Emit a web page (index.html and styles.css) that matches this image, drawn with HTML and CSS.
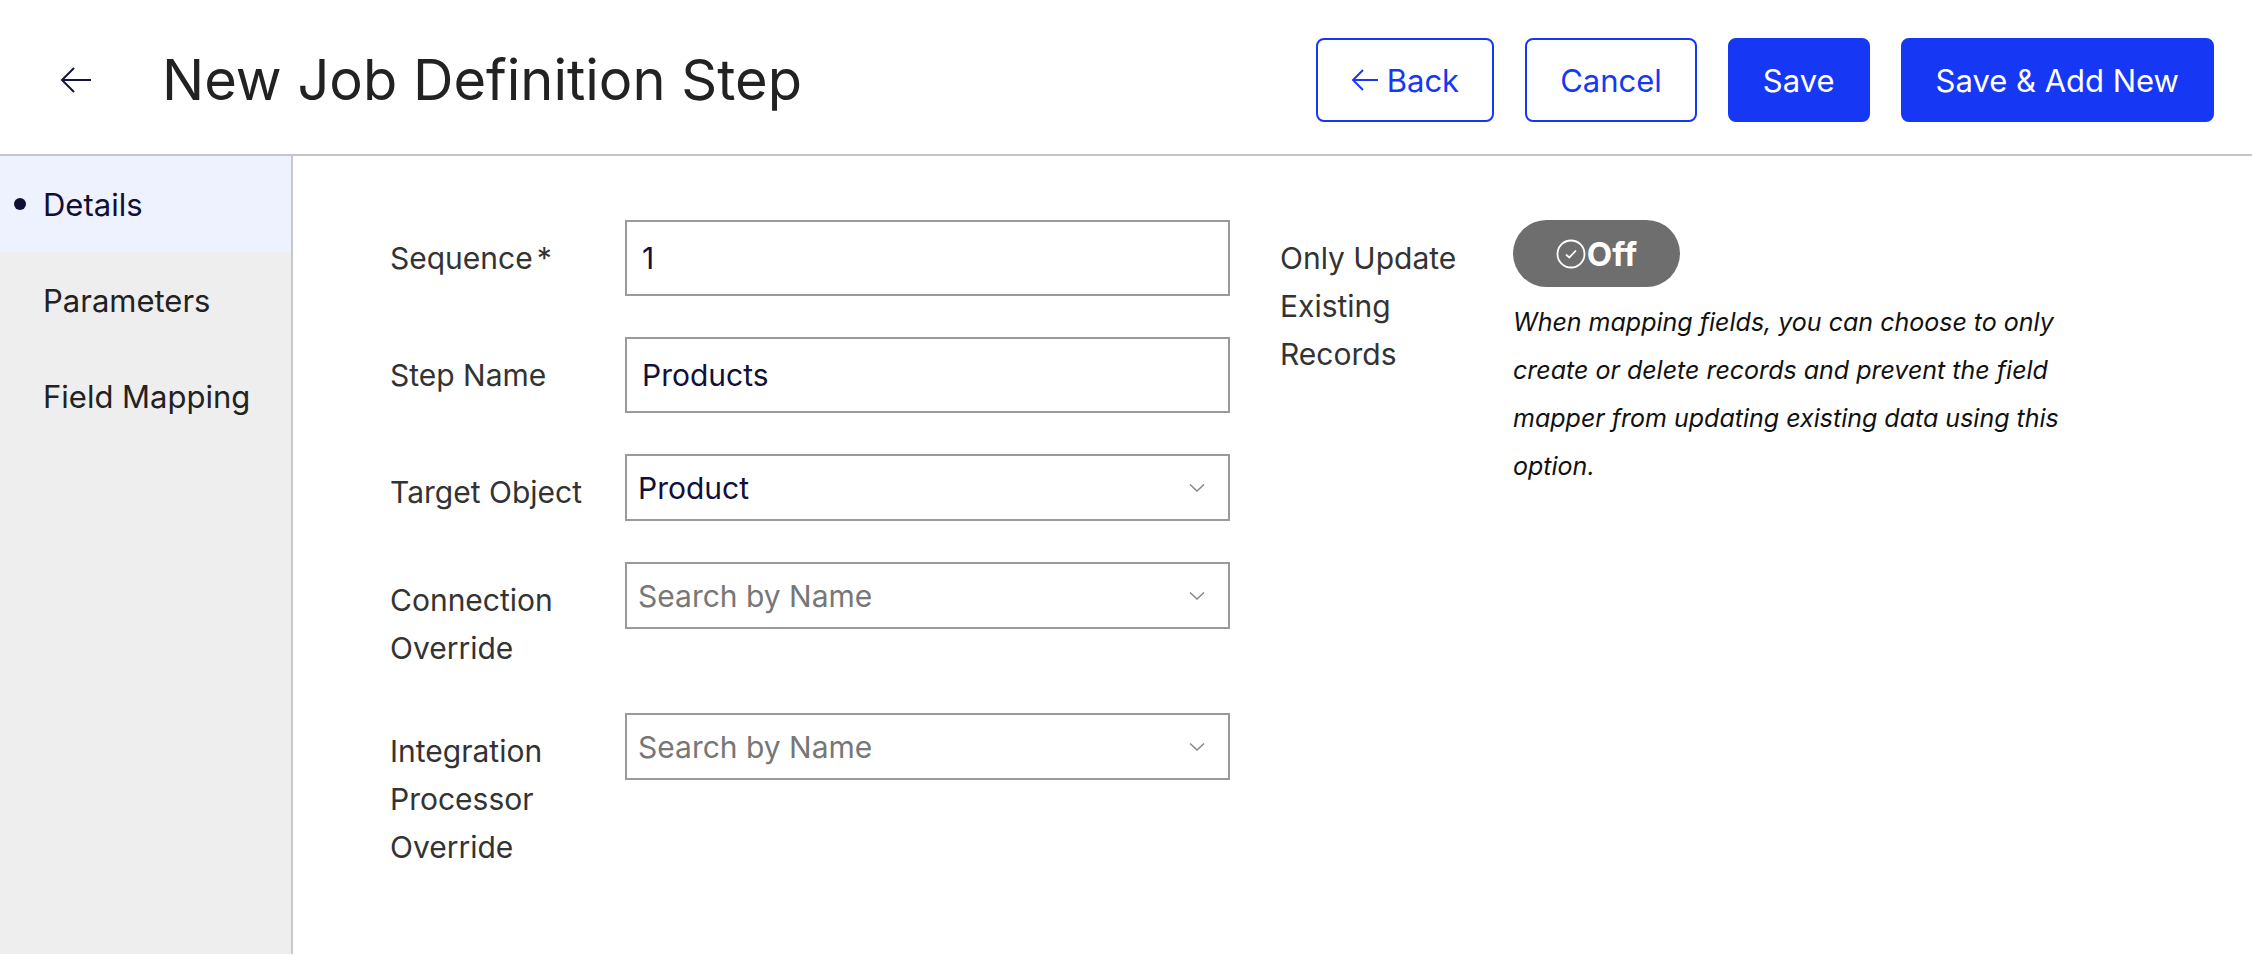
FILE: index.html
```html
<!DOCTYPE html>
<html lang="en">
<head>
    <meta charset="UTF-8">
    <meta name="viewport" content="width=device-width, initial-scale=1.0">
    <title>New Job Definition Step</title>
    <link rel="stylesheet" href="styles.css">
</head>
<body>
    <header class="page-header">
        <a class="back-link" href="#" aria-label="Back">
            <svg width="32" height="28" viewBox="0 0 32 28" fill="none" stroke="currentColor" stroke-width="2">
                <path d="M31 14H2M14 2L2 14L14 26"/>
            </svg>
        </a>
        <h1 class="page-title">New Job Definition Step</h1>
        <div class="header-actions">
            <button class="btn btn-outline">
                <svg width="28" height="24" viewBox="0 0 28 24" fill="none" stroke="currentColor" stroke-width="2">
                    <path d="M27 12H2M12 2L2 12L12 22"/>
                </svg>
                Back
            </button>
            <button class="btn btn-outline">Cancel</button>
            <button class="btn btn-primary">Save</button>
            <button class="btn btn-primary">Save &amp; Add New</button>
        </div>
    </header>

    <div class="page-body">
        <nav class="side-nav">
            <a class="side-nav-item active" href="#">Details</a>
            <a class="side-nav-item" href="#">Parameters</a>
            <a class="side-nav-item" href="#">Field Mapping</a>
        </nav>

        <main class="form-area">
            <div class="form-grid">
                <label class="field-label">Sequence<span class="required">*</span></label>
                <input class="text-input" type="text" value="1">

                <label class="field-label">Step Name</label>
                <input class="text-input" type="text" value="Products">

                <label class="field-label">Target Object</label>
                <div class="select-input">
                    <span class="select-value">Product</span>
                    <svg class="chevron" width="16" height="8" viewBox="0 0 16 8" fill="none" stroke="currentColor" stroke-width="1.5">
                        <path d="M1 0.5L8 7L15 0.5"/>
                    </svg>
                </div>

                <label class="field-label">Connection Override</label>
                <div class="select-input">
                    <span class="select-placeholder">Search by Name</span>
                    <svg class="chevron" width="16" height="8" viewBox="0 0 16 8" fill="none" stroke="currentColor" stroke-width="1.5">
                        <path d="M1 0.5L8 7L15 0.5"/>
                    </svg>
                </div>

                <label class="field-label">Integration Processor Override</label>
                <div class="select-input">
                    <span class="select-placeholder">Search by Name</span>
                    <svg class="chevron" width="16" height="8" viewBox="0 0 16 8" fill="none" stroke="currentColor" stroke-width="1.5">
                        <path d="M1 0.5L8 7L15 0.5"/>
                    </svg>
                </div>
            </div>

            <div class="form-grid form-grid-side">
                <label class="field-label">Only Update Existing Records</label>
                <div class="toggle-field">
                    <button class="toggle">
                        <svg width="30" height="30" viewBox="0 0 30 30" fill="none" stroke="currentColor" stroke-width="1.8">
                            <circle cx="15" cy="15" r="13.5"/>
                            <path d="M10 15.5L13.3 18.5L20 11.5"/>
                        </svg>
                        Off
                    </button>
                    <p class="field-help">When mapping fields, you can choose to only create or delete records and prevent the field mapper from updating existing data using this option.</p>
                </div>
            </div>
        </main>
    </div>
</body>
</html>
```

FILE: styles.css
```css
/* Global Styles */
body {
    margin: 0;
    padding: 0;
    font-family: 'Inter', 'Noto Sans', sans-serif;
    color: #222;
    background: #fff;
}

/* Header */
.page-header {
    display: flex;
    align-items: center;
    height: 156px;
    padding: 6px 38px 0 60px;
    box-sizing: border-box;
    border-bottom: 2px solid #c6c6c6;
}

.back-link {
    display: flex;
    color: #14143c;
}

.page-title {
    margin: 0 0 0 70px;
    font-size: 56px;
    font-weight: 400;
    color: #222;
}

.header-actions {
    margin-left: auto;
    display: flex;
    gap: 31px;
}

.btn {
    display: flex;
    align-items: center;
    gap: 8px;
    height: 84px;
    padding: 0 33px;
    font-family: inherit;
    font-size: 31px;
    border: 2px solid #1638f5;
    border-radius: 8px;
    cursor: pointer;
}

.btn-outline {
    background: #fff;
    color: #1638f5;
}

.btn-primary {
    background: #1638f5;
    color: #fff;
}

/* Body */
.page-body {
    display: flex;
    height: calc(100vh - 158px);
}

.side-nav {
    width: 291px;
    flex-shrink: 0;
    background: #eeeeee;
    border-right: 2px solid #c8c8c8;
}

.side-nav-item {
    display: flex;
    align-items: center;
    height: 96px;
    padding-left: 14px;
    font-size: 31px;
    color: #222;
    text-decoration: none;
}

.side-nav-item::before {
    content: '';
    width: 12px;
    height: 12px;
    margin-right: 17px;
    border-radius: 50%;
    background: #101035;
    visibility: hidden;
}

.side-nav-item.active {
    background: #eef1fe;
    color: #101035;
}

.side-nav-item.active::before {
    visibility: visible;
}

/* Form */
.form-area {
    display: flex;
    align-items: flex-start;
    gap: 50px;
    padding: 64px 0 0 97px;
}

.form-grid {
    display: grid;
    grid-template-columns: 235px 605px;
    row-gap: 41px;
}

.form-grid-side {
    grid-template-columns: 233px 580px;
}

.field-label {
    padding: 14px 14px 0 0;
    font-size: 30px;
    line-height: 48px;
    color: #333;
}

.required {
    margin-left: 4px;
}

.text-input {
    height: 76px;
    box-sizing: border-box;
    margin: 0;
    padding: 0 15px;
    font-family: inherit;
    font-size: 30px;
    color: #10103a;
    border: 2px solid #9a9a9a;
    border-radius: 0;
    outline: none;
}

.select-input {
    display: flex;
    align-items: center;
    justify-content: space-between;
    height: 67px;
    box-sizing: border-box;
    padding: 0 23px 0 11px;
    font-size: 30px;
    border: 2px solid #9a9a9a;
}

.select-value {
    color: #10103a;
}

.select-placeholder {
    color: #777;
}

.chevron {
    color: #888;
}

/* Toggle */
.toggle {
    display: flex;
    align-items: center;
    justify-content: center;
    gap: 1px;
    width: 167px;
    height: 67px;
    padding: 0;
    font-family: inherit;
    font-size: 33px;
    font-weight: 700;
    color: #fff;
    background: #6e6e6e;
    border: none;
    border-radius: 34px;
    cursor: pointer;
}

.field-help {
    margin: 11px 0 0;
    font-size: 25px;
    font-style: italic;
    line-height: 48px;
    color: #111;
}
```
